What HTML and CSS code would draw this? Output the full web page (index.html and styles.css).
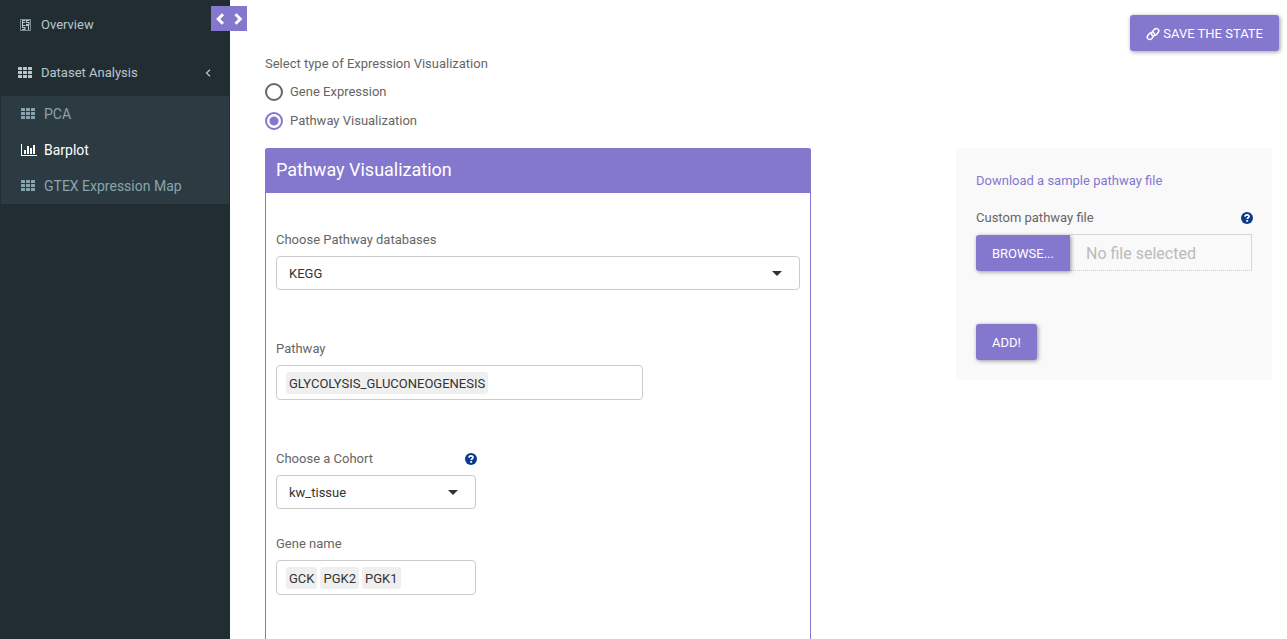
FILE: index.html
```html
<!DOCTYPE html>
<html lang="en">
<head>
<meta charset="utf-8">
<meta name="viewport" content="width=device-width, initial-scale=1">
<title>Expression Visualization</title>
<link rel="stylesheet" href="styles.css">
</head>
<body>
<svg class="defs" aria-hidden="true">
  <symbol id="grid" viewBox="0 0 14 12">
    <path d="M.5 0h3q.5 0 .5.5v2q0 .5-.5.5h-3q-.5 0-.5-.5v-2Q0 0 .5 0zM5.500 0h3q.5 0 .5.500v2q0 .5-.5.5h-3q-.5 0-.5-.5v-2q0-.5.5-.5zM10.500 0h3q.5 0 .5.500v2q0 .5-.5.5h-3q-.5 0-.5-.5v-2q0-.5.5-.5zM.5 4h3q.5 0 .5.5v2q0 .5-.5.5h-3q-.5 0-.5-.5v-2Q0 4 .5 4zM5.500 4h3q.5 0 .5.500v2q0 .5-.5.5h-3q-.5 0-.5-.5v-2q0-.5.5-.5zM10.500 4h3q.5 0 .5.500v2q0 .5-.5.5h-3q-.5 0-.5-.5v-2q0-.5.5-.5zM.5 8h3q.5 0 .5.5v2q0 .5-.5.5h-3q-.5 0-.5-.5v-2Q0 8 .5 8zM5.500 8h3q.5 0 .5.500v2q0 .5-.5.5h-3q-.5 0-.5-.5v-2q0-.5.5-.5zM10.500 8h3q.5 0 .5.500v2q0 .5-.5.5h-3q-.5 0-.5-.5v-2q0-.5.5-.5z" fill="currentColor"/>
  </symbol>
  <symbol id="help" viewBox="0 0 12 12">
    <circle cx="6" cy="6" r="6" fill="#0a3a8c"/>
    <path d="M4 4.600C4.100 2.200 8 2.200 8 4.500C8 5.700 6.200 5.700 6.200 7.100" fill="none" stroke="#fff" stroke-width="1.700"/>
    <path d="M5.200 8h1.900v1.700H5.200z" fill="#fff"/>
  </symbol>
  <symbol id="caret" viewBox="0 0 10 5"><path d="M0 0h10L5 5z" fill="#333"/></symbol>
</svg>
<div class="app">
  <aside class="sidebar">
    <nav class="menu">
      <a class="menu-item" href="#">
        <svg class="icon" viewBox="0 0 14 14" aria-hidden="true"><g fill="none" stroke="currentColor"><path d="M2.500 1.500h10v11h-10z" opacity=".6"/><path d="M4.500 7V2.500H7.500M4.500 4.500H7M11.500 2.500H8.500V4.500h2.500v2H8M7.500 7.500H4.500V9.500h2.500v2H4M8 7.500h2.500v4.500" stroke-width="1.100"/></g></svg>
        <span>Overview</span>
      </a>
      <a class="menu-item" href="#">
        <svg class="icon" viewBox="0 -1 14 14" aria-hidden="true"><use href="#grid" width="14" height="12"/></svg>
        <span>Dataset Analysis</span>
        <svg class="angle" viewBox="0 0 6 8" aria-hidden="true"><path d="M5 .8L1.500 4L5 7.200" fill="none" stroke="currentColor" stroke-width="1.200"/></svg>
      </a>
      <div class="submenu">
        <a class="sub-item" href="#"><svg class="icon" viewBox="0 -1 14 14" aria-hidden="true"><use href="#grid" width="14" height="12"/></svg><span>PCA</span></a>
        <a class="sub-item active" href="#"><svg class="icon wide" viewBox="0 0 16 14" aria-hidden="true"><path d="M0 1h1v11h15v1H0zM3 7h2v4H3zM6 3h2v8H6zM9 5h2v6H9zM12 2h2v9h-2z" fill="currentColor"/></svg><span>Barplot</span></a>
        <a class="sub-item" href="#"><svg class="icon" viewBox="0 -1 14 14" aria-hidden="true"><use href="#grid" width="14" height="12"/></svg><span>GTEX Expression Map</span></a>
      </div>
    </nav>
    <button class="toggle" type="button" aria-label="Toggle sidebar">
      <svg viewBox="0 0 28 14" aria-hidden="true"><path d="M8 2.200L3.200 7L8 11.800M20.500 2.200L25.300 7L20.500 11.800" fill="none" stroke="currentColor" stroke-width="3"/></svg>
    </button>
  </aside>

  <main class="content">
    <header class="top">
      <fieldset class="type">
        <legend>Select type of Expression Visualization</legend>
        <label class="choice"><input type="radio" name="type">Gene Expression</label>
        <label class="choice"><input type="radio" name="type" checked>Pathway Visualization</label>
      </fieldset>
      <button class="btn save" type="button">
        <svg viewBox="0 0 14 14" aria-hidden="true"><g fill="none" stroke="currentColor" stroke-width="1.500"><path d="M7.200 8.800C5 8 5.200 6.200 6.200 5L8.400 2.300C10.500 .2 14 2.600 12.300 5.300L10.300 7.700Q9.500 8.500 8.500 8.300"/><path d="M6.800 5.200C9 6 8.800 7.800 7.800 9L5.600 11.700C3.500 13.800 0 11.400 1.700 8.700L3.700 6.300Q4.500 5.500 5.500 5.700"/></g></svg>
        SAVE THE STATE
      </button>
    </header>

    <div class="columns">
      <section class="box">
        <h2>Pathway Visualization</h2>
        <div class="fields">
          <div class="field">
            <label for="database">Choose Pathway databases</label>
            <div class="select"><select id="database"><option>KEGG</option></select><svg aria-hidden="true"><use href="#caret"/></svg></div>
          </div>
          <div class="field medium">
            <label for="pathway">Pathway</label>
            <div class="tokens"><span>GLYCOLYSIS_GLUCONEOGENESIS</span><input id="pathway" type="text"></div>
          </div>
          <div class="field small">
            <div class="label-row"><label for="cohort">Choose a Cohort</label><svg class="help" aria-hidden="true"><use href="#help"/></svg></div>
            <div class="select"><select id="cohort"><option>kw_tissue</option></select><svg aria-hidden="true"><use href="#caret"/></svg></div>
          </div>
          <div class="field small">
            <label for="gene">Gene name</label>
            <div class="tokens"><span>GCK</span><span>PGK2</span><span>PGK1</span><input id="gene" type="text"></div>
          </div>
        </div>
      </section>

      <section class="well">
        <a class="download" href="#">Download a sample pathway file</a>
        <div class="label-row"><label for="file">Custom pathway file</label><svg class="help" aria-hidden="true"><use href="#help"/></svg></div>
        <div class="file">
          <button class="btn browse" type="button">BROWSE...</button>
          <input id="file" type="text" placeholder="No file selected" readonly>
        </div>
        <button class="btn add" type="button">ADD!</button>
      </section>
    </div>
  </main>
</div>
</body>
</html>
```

FILE: styles.css
```css
* { box-sizing: border-box; }

body {
  margin: 0;
  font: 13px/24px Roboto, "Liberation Sans", sans-serif;
  color: #666;
  background: #fff;
}

a { text-decoration: none; }
button, input, select { font: inherit; margin: 0; }
.defs { position: absolute; width: 0; height: 0; }

.app { display: flex; min-height: 100vh; }

/* Sidebar */
.sidebar { position: relative; flex: 0 0 230px; background: #222d32; }
.menu-item {
  display: flex;
  align-items: center;
  gap: 9px;
  height: 48px;
  padding: 1px 19px 0 18px;
  color: #b8c7ce;
}
.icon { flex: none; width: 14px; height: 14px; }
.icon.wide { width: 16px; margin-right: -2px; }
.angle { width: 6px; height: 8px; margin-left: auto; }
.submenu { margin: 0 1px; background: #2c3b41; }
.sub-item {
  display: flex;
  align-items: center;
  gap: 9px;
  height: 36px;
  padding-left: 20px;
  font-size: 14px;
  color: #8aa4af;
}
.sub-item.active { color: #fff; }
.toggle {
  position: absolute;
  top: 6px;
  left: 211px;
  width: 36px;
  height: 25px;
  padding: 0 4px;
  border: 0;
  background: #8477ce;
  color: #fff;
}
.toggle svg { display: block; width: 28px; height: 14px; }

/* Content */
.content {
  flex: 1;
  display: flex;
  flex-direction: column;
  min-width: 0;
  padding: 15px 15px 0 35px;
}
.top { display: flex; justify-content: space-between; align-items: flex-start; }
.type { margin: 0; padding: 36px 0 15px; border: 0; display: grid; gap: 5px; }
.type legend { float: left; height: 24px; padding: 0; line-height: 26px; }
.choice { display: flex; align-items: center; gap: 7px; height: 24px; line-height: 26px; }
.choice input {
  appearance: none;
  width: 18px;
  height: 18px;
  border: 2px solid #666;
  border-radius: 50%;
}
.choice input:checked {
  border-color: #8477ce;
  background: radial-gradient(circle, #8477ce 4px, #fff 5px);
}
.btn {
  height: 36px;
  padding: 2px 16px 0;
  border: 0;
  border-radius: 3px;
  background: #8477ce;
  color: #fff;
  white-space: nowrap;
  box-shadow: 1px 1px 4px rgba(0, 0, 0, .4);
}
.save { display: flex; align-items: center; gap: 3px; margin-right: -7px; }
.save svg { width: 14px; height: 14px; }

.columns {
  flex: 1;
  display: grid;
  grid-template-columns: 546fr 316fr;
  column-gap: 145px;
}
.box { border: solid #8477ce; border-width: 0 1px; border-radius: 3px 3px 0 0; }
.box h2 {
  margin: 0 -1px;
  padding: 0 11px 2px;
  border-radius: 3px 3px 0 0;
  background: #8477ce;
  color: #fff;
  font-size: 18px;
  font-weight: 400;
  line-height: 43px;
}
.fields { padding: 35px 10px 40px; }
.field { margin-bottom: 47px; }
.field > label { display: block; }
.field label, .label-row { margin-bottom: 4px; }
.label-row { display: flex; align-items: center; justify-content: space-between; }
.field .label-row label { margin: 0; }
.medium { width: 70%; }
.small { width: 200px; margin-bottom: 23px; }
.help { width: 12px; height: 12px; margin-right: -1px; }
.select { display: grid; align-items: center; }
.select select, .select svg { grid-area: 1 / 1; }
.select select {
  appearance: none;
  width: 100%;
  height: 34px;
  padding: 2px 12px 0;
  border: 1px solid #ccc;
  border-radius: 4px;
  background: #fff;
  color: #333;
}
.select svg { justify-self: end; width: 10px; height: 5px; margin-right: 18px; pointer-events: none; }
.tokens {
  display: flex;
  align-items: center;
  gap: 3px;
  height: 35px;
  padding: 0 9px;
  border: 1px solid #ccc;
  border-radius: 4px;
}
.tokens span { height: 22px; padding: 0 3px; border-radius: 3px; background: #efefef; color: #333; line-height: 24px; }
.tokens input { flex: 1; min-width: 0; width: 0; border: 0; padding: 0; outline: 0; }

/* Upload panel */
.well { align-self: start; padding: 21px 20px 20px; background: #f9f9f9; }
.download { display: block; margin-bottom: 13px; color: #8477ce; }
.file { display: flex; align-items: center; margin-bottom: 53px; }
.browse { position: relative; border-radius: 3px 0 0 3px; }
.file input {
  flex: 1;
  min-width: 0;
  width: 0;
  height: 37px;
  padding: 2px 16px 0;
  border: 1px solid #d2d6de;
  border-bottom: 1px dotted #ccc;
  border-left: 0;
  background: transparent;
  font-size: 16px;
}
.file input::placeholder { color: #bbb; }
```
